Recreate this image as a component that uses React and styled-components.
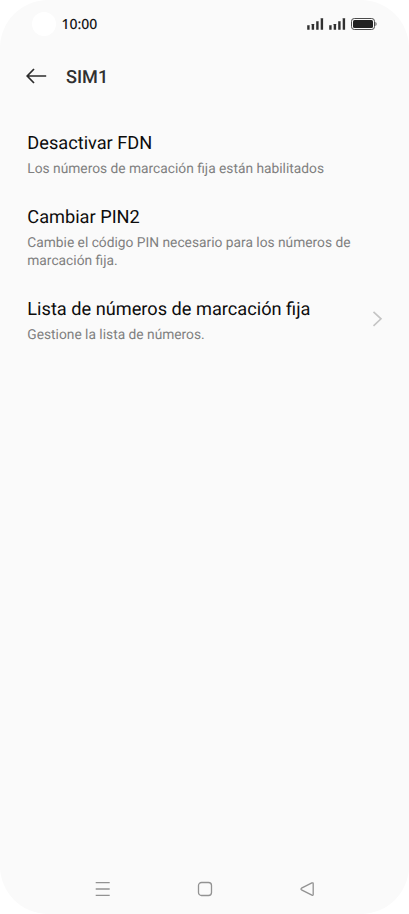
import React from "react";
import styled, { createGlobalStyle } from "styled-components";

const GlobalStyle = createGlobalStyle`
  * { box-sizing: border-box; }
  body { margin: 0; background: #fff; overflow: hidden; }
`;

const Screen = styled.main`
  width: 409px;
  height: 914px;
  display: flex;
  flex-direction: column;
  background: #fafafa;
  border-radius: 48px;
  font-family: Roboto, "Liberation Sans", sans-serif;
  text-rendering: geometricPrecision;
`;

const StatusBar = styled.header`
  height: 48px;
  display: flex;
  align-items: center;
  padding: 0 32px;
`;

const CameraHole = styled.div`
  width: 24px;
  height: 24px;
  border-radius: 50%;
  background: #fff;
`;

const Clock = styled.time`
  margin-left: 5.5px;
  padding-top: 2px;
  font: 500 14px/20px "Noto Sans", sans-serif;
  color: #161616;
`;

const StatusIcons = styled.div`
  display: flex;
  align-items: center;
  margin-left: auto;
`;

const SignalIcon = styled.svg`
  width: 17px;
  height: 12px;
  margin-right: 5px;
  fill: #303030;
`;

const BatteryIcon = styled.svg`
  width: 26px;
  height: 12px;
`;

const TitleBar = styled.div`
  height: 56px;
  display: flex;
  align-items: center;
  padding: 0 26px;
`;

const BackButton = styled.button`
  display: flex;
  padding: 0;
  border: 0;
  background: none;
`;

const Title = styled.h1`
  margin: 0 0 0 19px;
  padding-top: 3px;
  font-size: 18.1px;
  line-height: 24px;
  font-weight: 500;
  color: #303030;
`;

const SettingsList = styled.ul`
  flex: 1;
  display: flex;
  flex-direction: column;
  gap: 27px;
  margin: 0;
  padding: 28px 26px 0 27.3px;
  list-style: none;
`;

const SettingRow = styled.li`
  display: flex;
  align-items: center;
  justify-content: space-between;
`;

const SettingText = styled.div`
  width: 335px;
`;

const SettingTitle = styled.div`
  font-size: 18.2px;
  line-height: 24px;
  color: #0c0c0c;
  white-space: nowrap;
`;

const SettingDescription = styled.div`
  margin-top: 4.1px;
  font-size: 13.78px;
  line-height: 18.5px;
  color: #808080;
  white-space: pre-line;
`;

const Chevron = styled.svg`
  width: 11px;
  height: 16px;
  margin-bottom: 4px;
  fill: none;
  stroke: #c4c4c4;
  stroke-width: 1.6;
`;

const NavigationBar = styled.nav`
  height: 50px;
  display: flex;
  align-items: center;
  justify-content: space-between;
  padding: 0 94px;
`;

const NavIcon = styled.svg`
  width: 16px;
  height: 16px;
  fill: none;
  stroke: #929292;
  stroke-width: 1.3;
  stroke-linejoin: round;
`;

const settings = [
  {
    title: "Desactivar FDN",
    description: "Los números de marcación fija están habilitados",
  },
  {
    title: "Cambiar PIN2",
    description: "Cambie el código PIN necesario para los números de\nmarcación fija.",
  },
  {
    title: "Lista de números de marcación fija",
    description: "Gestione la lista de números.",
    opens: true,
  },
];

function Signal() {
  return (
    <SignalIcon viewBox="0 0 17 12" aria-hidden="true">
      <rect x="0.2" y="7.3" width="2.4" height="4.4" rx="0.2" />
      <rect x="4.7" y="6" width="2.4" height="5.7" rx="0.2" />
      <rect x="9.2" y="3.3" width="2.4" height="8.4" rx="0.2" />
      <rect x="13.7" y="0.2" width="2.4" height="11.5" rx="0.2" />
    </SignalIcon>
  );
}

function Battery() {
  return (
    <BatteryIcon viewBox="0 0 26 12" aria-hidden="true">
      <rect x="0.5" y="0.5" width="23" height="11" rx="2.8" fill="none" stroke="#4b4b4b" />
      <rect x="2" y="2" width="20" height="8" rx="1.5" fill="#222" />
      <path d="M24.3 4v4c1.8-.5 1.8-3.5 0-4Z" fill="#777" />
    </BatteryIcon>
  );
}

export default function App() {
  return (
    <>
      <GlobalStyle />
      <Screen>
        <StatusBar>
          <CameraHole />
          <Clock>10:00</Clock>
          <StatusIcons>
            <Signal />
            <Signal />
            <Battery />
          </StatusIcons>
        </StatusBar>
        <TitleBar>
          <BackButton aria-label="Atrás">
            <svg width="21" height="16" viewBox="0 0 21 16" fill="none" stroke="#2c2c2c" strokeWidth="1.7">
              <path d="M8 1 1.2 8 8 15M1.2 8h19" />
            </svg>
          </BackButton>
          <Title>SIM1</Title>
        </TitleBar>
        <SettingsList>
          {settings.map(({ title, description, opens }) => (
            <SettingRow key={title}>
              <SettingText>
                <SettingTitle>{title}</SettingTitle>
                <SettingDescription>{description}</SettingDescription>
              </SettingText>
              {opens && (
                <Chevron viewBox="0 0 11 16" aria-hidden="true">
                  <path d="m1.5 .8 7.5 7-7.5 7" />
                </Chevron>
              )}
            </SettingRow>
          ))}
        </SettingsList>
        <NavigationBar>
          <NavIcon viewBox="0 0 16 16">
            <path d="M1.7 1.7h14M1.7 8h14M1.7 14.3h14" />
          </NavIcon>
          <NavIcon viewBox="0 0 16 16">
            <rect x="1.5" y="1.5" width="13" height="13" rx="3" />
          </NavIcon>
          <NavIcon viewBox="0 0 16 16">
            <path d="M12.9 1.9 2.5 7.2Q1.4 8 2.5 8.8l10.4 5.4Q14.2 14.6 14.2 13.4V2.7Q14.2 1.5 12.9 1.9Z" />
          </NavIcon>
        </NavigationBar>
      </Screen>
    </>
  );
}
